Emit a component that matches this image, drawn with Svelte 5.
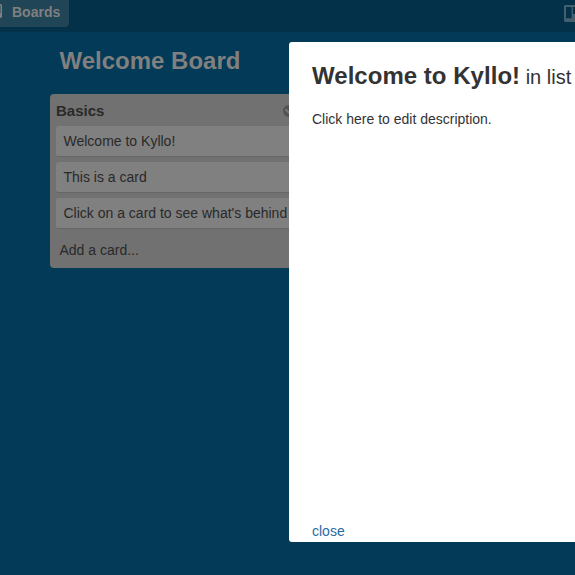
<script>
  const cards = [
    'Welcome to Kyllo!',
    'This is a card',
    "Click on a card to see what's behind"
  ];
</script>

<div class="app">
  <header>
    <button class="boards">
      <svg width="14" height="14" viewBox="0 0 14 14"><path fill="#808080" fill-rule="evenodd" d="M0 0h13l1 1v12l-1 1H0zM1.5 1.5v11H6v-11zM7.5 1.5v7.5h5V1.5z" /></svg>
      <span>Boards</span>
    </button>
    <svg class="logo" width="17" height="17" viewBox="0 0 17 17"><path fill="#455f6f" fill-rule="evenodd" d="M1 0h15l1 1v15l-1 1H1l-1-1V1zM2 2v11.3h5.6V2zM9 2v7h6V2z" /></svg>
  </header>

  <main>
    <h1>Welcome Board</h1>
    <section class="list">
      <div class="list-head">
        <h2>Basics</h2>
        <svg width="12" height="12" viewBox="0 0 12 12"><circle cx="6" cy="6" r="6" fill="#525252" /><path d="M2.5 4.3 6 7.8l3.5-3.5" fill="none" stroke="#757575" stroke-width="2.2" /></svg>
      </div>
      {#each cards as card}
        <article>{card}</article>
      {/each}
      <div class="add">Add a card...</div>
    </section>
  </main>

  <div class="modal" role="dialog">
    <div class="title"><strong>Welcome to Kyllo!</strong> <span>in list</span></div>
    <p>Click here to edit description.</p>
    <button class="close">close</button>
  </div>
</div>

<style>
  .app {
    position: relative;
    box-sizing: border-box;
    width: 575px;
    height: 575px;
    overflow: hidden;
    background: #023a57;
    color: #292929;
    font: 14px/20px "Liberation Sans", Arial, sans-serif;
  }
  button {
    margin: 0;
    padding: 0;
    border: 0;
    background: none;
    font: inherit;
  }
  header {
    display: flex;
    justify-content: space-between;
    height: 32px;
    background: #033149;
  }
  .boards {
    display: flex;
    align-items: flex-start;
    gap: 10px;
    box-sizing: border-box;
    width: 81px;
    height: 27px;
    margin-left: -12px;
    padding: 4px 0 0;
    border-radius: 0 0 4px 4px;
    background: #1f4557;
    color: #808080;
    font-weight: bold;
    line-height: 16px;
  }
  .logo {
    flex: none;
    margin: 5px -6px 0 0;
  }
  main {
    padding: 12px 0 0 50px;
  }
  h1 {
    height: 34px;
    margin: 0 0 16px 9.5px;
    color: #808080;
    font-size: 24px;
    line-height: 34px;
  }
  .list {
    box-sizing: border-box;
    width: 256px;
    height: 174px;
    padding: 6px 6px 0;
    border-radius: 4px;
    background: #717171;
  }
  .list-head {
    display: flex;
    justify-content: space-between;
    height: 26px;
  }
  .list-head svg {
    margin: 5px 5px 0 0;
  }
  h2 {
    margin: 1px 0 0;
    font-size: 15px;
    line-height: 20px;
  }
  article {
    box-sizing: border-box;
    height: 31px;
    margin-bottom: 5px;
    padding: 5px 7.5px;
    border-bottom: 1px solid #666;
    border-radius: 3px;
    background: #808080;
    white-space: nowrap;
  }
  .add {
    padding: 6px 3.5px;
  }
  .modal {
    position: absolute;
    top: 42px;
    left: 289px;
    display: flex;
    flex-direction: column;
    align-items: flex-start;
    box-sizing: border-box;
    width: 600px;
    height: 500px;
    padding: 18px 23px 1px;
    border-radius: 3px;
    background: #fff;
    color: #333;
  }
  .title {
    height: 32px;
    font-size: 20px;
    line-height: 32px;
    white-space: nowrap;
  }
  .title strong {
    font-size: 24px;
    letter-spacing: 0.03px;
  }
  p {
    margin: 17px 0 0;
  }
  .close {
    margin-top: auto;
    color: #2a6aa5;
    line-height: 20px;
  }
</style>
